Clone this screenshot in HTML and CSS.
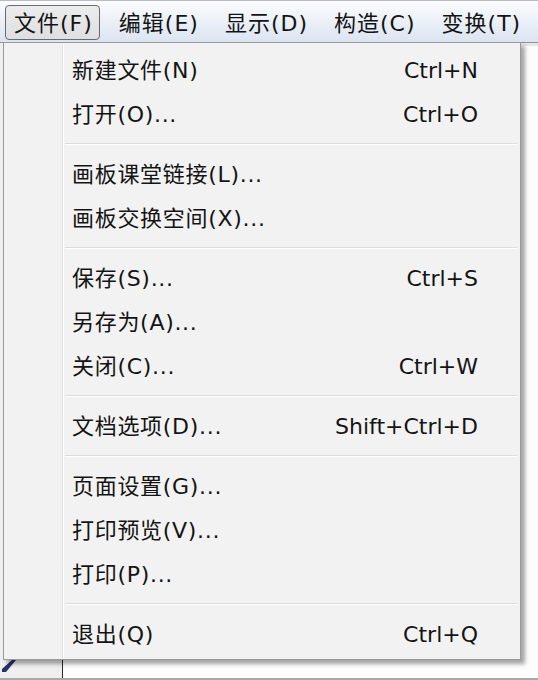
FILE: index.html
```html
<!DOCTYPE html>
<html lang="zh-CN">
<head>
<meta charset="utf-8">
<title>文件菜单</title>
<link rel="stylesheet" href="styles.css">
</head>
<body>
<div class="window">
  <div class="menubar">
    <div class="bar-item active">文件(F)</div>
    <div class="bar-item">编辑(E)</div>
    <div class="bar-item">显示(D)</div>
    <div class="bar-item">构造(C)</div>
    <div class="bar-item">变换(T)</div>
  </div>
  <div class="workspace">
    <div class="toolpanel">
      <svg class="tool-mark" width="14" height="12" viewBox="0 0 14 12"><polygon points="0,12 0,9 10,0 14,0 4,12" fill="#27306b"/></svg>
    </div>
    <div class="canvas"></div>
  </div>
  <div class="menu">
    <div class="row"><span class="label">新建文件(N)</span><span class="key">Ctrl+N</span></div>
    <div class="row"><span class="label">打开(O)...</span><span class="key">Ctrl+O</span></div>
    <div class="sep"></div>
    <div class="row"><span class="label">画板课堂链接(L)...</span></div>
    <div class="row"><span class="label">画板交换空间(X)...</span></div>
    <div class="sep"></div>
    <div class="row"><span class="label">保存(S)...</span><span class="key">Ctrl+S</span></div>
    <div class="row"><span class="label">另存为(A)...</span></div>
    <div class="row"><span class="label">关闭(C)...</span><span class="key">Ctrl+W</span></div>
    <div class="sep"></div>
    <div class="row"><span class="label">文档选项(D)...</span><span class="key">Shift+Ctrl+D</span></div>
    <div class="sep"></div>
    <div class="row"><span class="label">页面设置(G)...</span></div>
    <div class="row"><span class="label">打印预览(V)...</span></div>
    <div class="row"><span class="label">打印(P)...</span></div>
    <div class="sep"></div>
    <div class="row"><span class="label">退出(Q)</span><span class="key">Ctrl+Q</span></div>
  </div>
</div>
</body>
</html>
```
FILE: styles.css
```css
html, body {
  margin: 0;
  padding: 0;
  background: #ffffff;
}
body {
  font-family: "DejaVu Sans", "Noto Sans CJK SC", sans-serif;
  color: #141414;
}
.window {
  position: relative;
  width: 538px;
  height: 680px;
  overflow: hidden;
  display: flex;
  flex-direction: column;
}
.menubar {
  flex: none;
  display: flex;
  align-items: center;
  padding-left: 5px;
  border-top: 1px solid #b9bcc2;
  border-bottom: 1px solid #8e949c;
  background: linear-gradient(#fbfcfe, #dbe4f1);
  font-size: 22px;
  letter-spacing: 1px;
  box-sizing: border-box;
  height: 43px;
  white-space: nowrap;
}
.bar-item {
  flex: none;
  padding: 0 6px 0 8px;
  height: 35px;
  line-height: 35px;
  margin-right: 10px;
  border: 1px solid transparent;
  border-radius: 4px;
  box-sizing: border-box;
  margin-top: 2px;
}
.bar-item.active {
  border-color: #676a70;
  background: linear-gradient(#ececec, #dedfe1);
}
.workspace {
  flex: 1;
  display: flex;
  border-bottom: 2px solid #a9a9a9;
}
.toolpanel {
  width: 63px;
  border-right: 1px solid #2a2a2a;
  background: #efefef;
  display: flex;
  flex-direction: column;
  justify-content: flex-end;
  padding: 0 0 6px 2px;
  box-sizing: border-box;
}
.tool-mark {
  display: block;
}
.canvas {
  flex: 1;
  background: #fdfdfd;
  border-top: 3px solid #e6e6e6;
}
.menu {
  position: absolute;
  left: 3px;
  top: 42px;
  width: 518px;
  box-sizing: border-box;
  border: 1px solid #9a9a9a;
  padding: 5px 0 3px 0;
  background: linear-gradient(to right, #f2f2f2 58px, #e0e1e1 58px, #e0e1e1 59px, #ffffff 59px, #ffffff 60px, #f2f2f2 60px);
  box-shadow: 4px 4px 4px rgba(0, 0, 0, 0.35);
  font-size: 22px;
}
.row {
  height: 44px;
  line-height: 42px;
  display: flex;
  align-items: baseline;
  justify-content: space-between;
  padding: 2px 42px 0 68px;
  box-sizing: border-box;
}
.label {
  letter-spacing: 0.7px;
}
.key {
  letter-spacing: 0;
}
.sep {
  height: 16px;
  margin: 0 3px 0 61px;
  background: linear-gradient(transparent 7px, #dcdcdc 7px, #dcdcdc 8px, #ffffff 8px, #ffffff 9px, transparent 9px);
}
```
